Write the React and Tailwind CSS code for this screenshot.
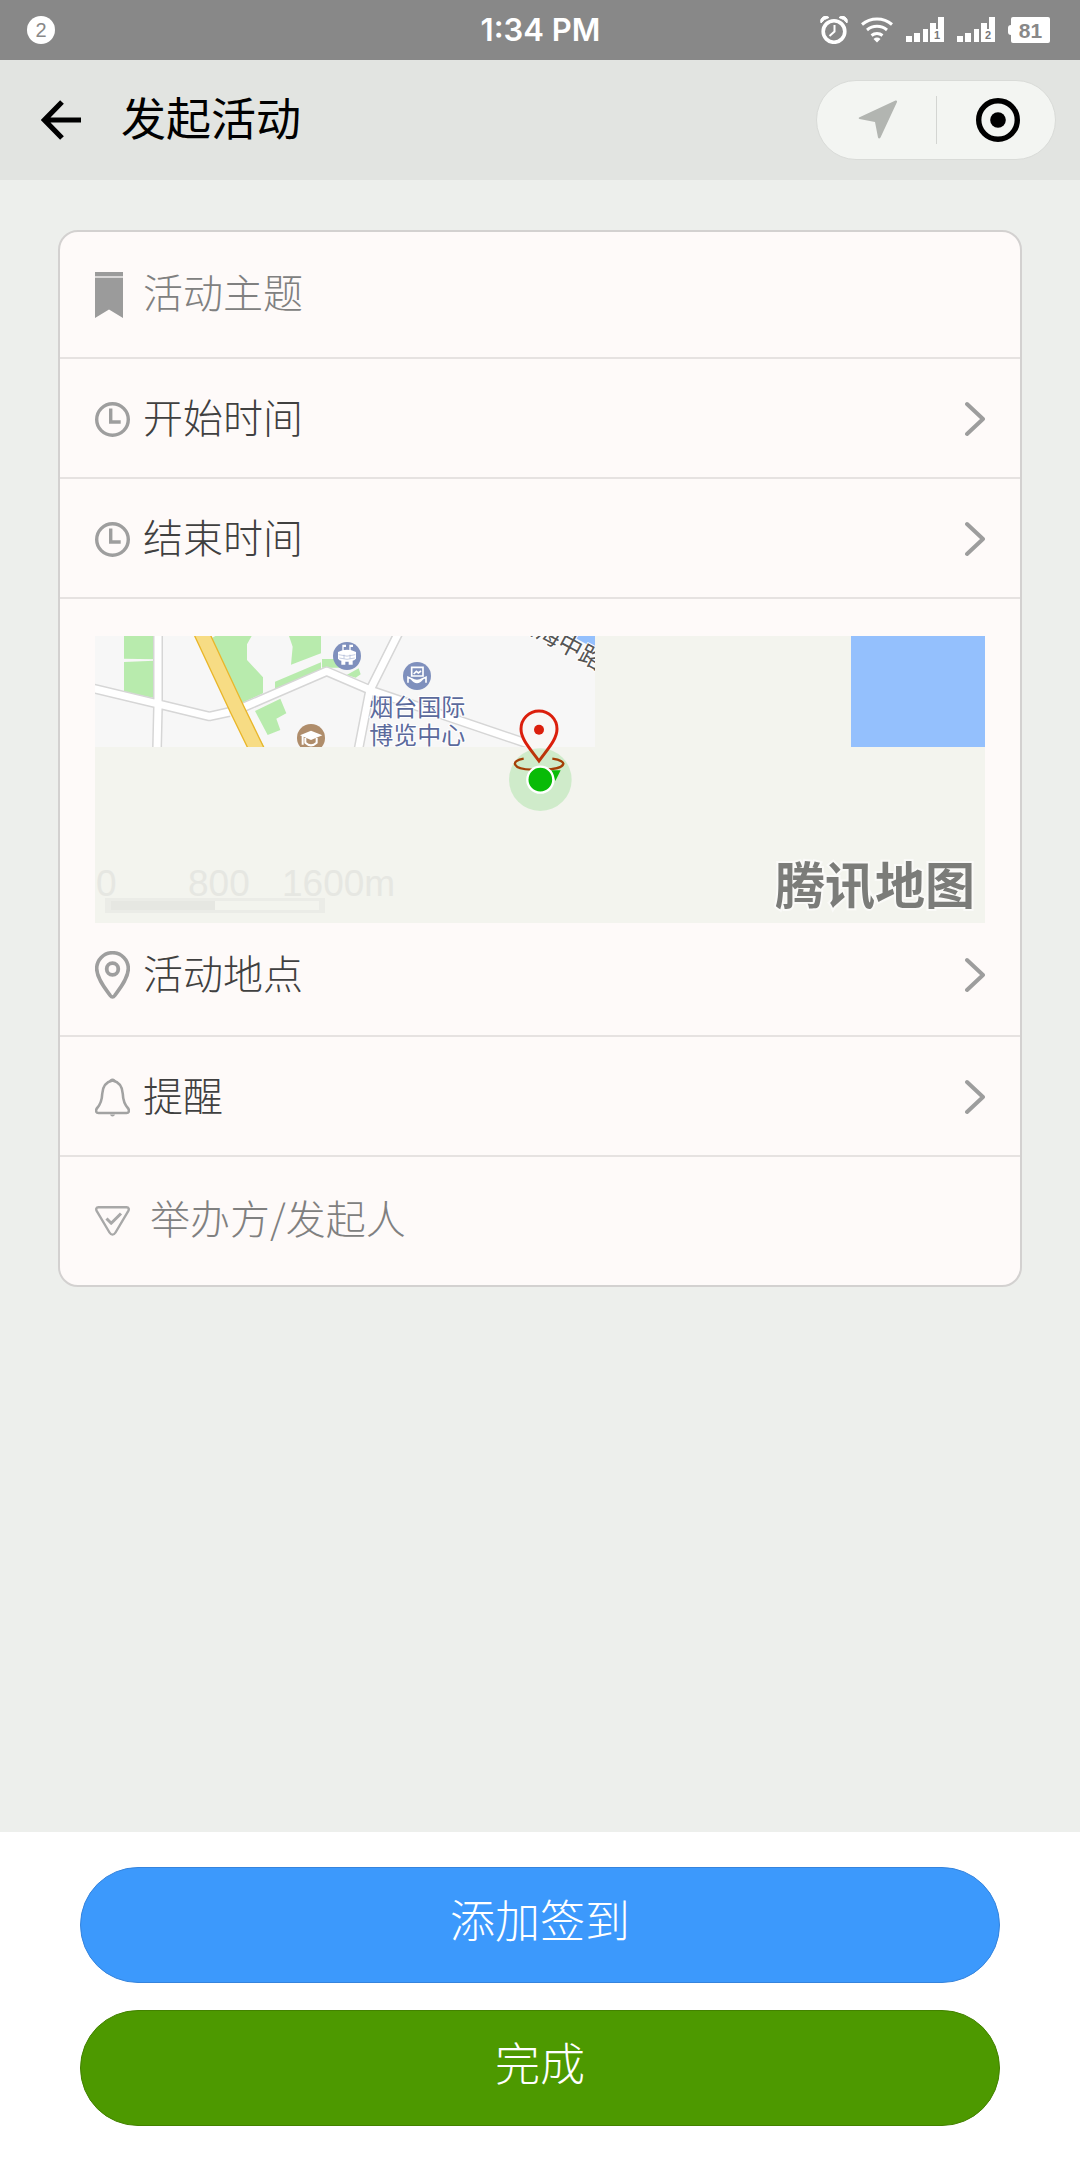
import React, { useState } from 'react';

const LINK_ROW = 'flex h-[120px] w-full items-center border-b-2 border-[#e6e2e1] px-[35px] pt-[2px] text-left';
const LABEL = 'ml-[13px] flex-1 text-[40px] leading-[56px] font-light text-[#404040]';
const FIELD = "mb-2 h-[56px] min-w-0 flex-1 bg-transparent font-['Noto_Sans_CJK_SC',sans-serif] text-[40px] leading-[56px] font-light text-[#404040] outline-none placeholder:text-[#808080]";

function SignalIcon({ sim }) {
  return (
    <svg width="38" height="26" viewBox="0 0 38 26" fill="#fff">
      <path d="M0 19h6v6H0zM8 16h6v9H8zM17 12h5v13h-5zM24 6h6v6h2V0h6v25H24z" />
      <text x="31" y="22" textAnchor="middle" fontSize="11" fontWeight="700" fill="#777">{sim}</text>
    </svg>
  );
}

function StatusBar() {
  return (
    <div className="grid h-[60px] grid-cols-3 items-center bg-[#888888] pr-[30px] pl-[27px] text-white">
      <div>
        <span className="flex h-7 w-7 items-center justify-center rounded-full bg-white text-[20px] leading-none text-[#888888]">2</span>
      </div>
      <div className="pl-1 text-center font-['Inter',sans-serif] text-[31px] leading-[40px] font-semibold">1:34 PM</div>
      <div className="flex items-center justify-end gap-[13px]">
        {/* alarm */}
        <svg width="28" height="28" viewBox="0 0 28 28" fill="none" stroke="#fff">
          <circle cx="14" cy="15.500" r="10.800" strokeWidth="3.600" />
          <path d="M14.500 9v6.500L9.500 20" strokeWidth="2" />
          <path d="M1 7a5 5 0 0 1 8-5.500A15 15 0 0 0 1 7zM27 7a5 5 0 0 0-8-5.500A15 15 0 0 1 27 7z" fill="#fff" strokeWidth="1" />
        </svg>
        {/* wifi */}
        <svg width="32" height="26" viewBox="0 0 32 26" fill="none" stroke="#fff" strokeWidth="3">
          <path d="M1 7.500a23 23 0 0 1 30 0M6 13a15.500 15.500 0 0 1 20 0M10.500 18.500a9 9 0 0 1 11 0" />
          <path d="M12.500 22a5.500 5.500 0 0 1 7 0L16 25.500z" fill="#fff" stroke="none" />
        </svg>
        <SignalIcon sim="1" />
        <SignalIcon sim="2" />
        <span className="flex items-center">
          <span className="h-[10px] w-[3px] rounded-l-sm bg-white" />
          <span className="flex h-[26px] w-[39px] items-center justify-center rounded-[2px] bg-white text-[21px] leading-none font-bold text-[#888888]">81</span>
        </span>
      </div>
    </div>
  );
}

function NavBar() {
  return (
    <header className="flex h-[120px] items-center bg-[#e2e4e1] pr-6 pl-[41px]">
      <button aria-label="返回">
        <svg width="40" height="40" viewBox="0 0 40 40" fill="none" stroke="#000" strokeWidth="5.200">
          <path d="M21 2 3.500 20 21 38M3 20h37" />
        </svg>
      </button>
      <h1 className="ml-10 flex-1 pt-[2px] text-[45px] leading-[60px] font-normal text-black">发起活动</h1>
      <div className="flex h-20 w-60 items-center rounded-full border border-[#d9dbd8] bg-[#f3f5f2]">
        <button aria-label="位置" className="flex flex-1 justify-center pl-1">
          <svg width="40" height="40" viewBox="0 0 40 40" fill="#b2b5b1">
            <path d="M1 17.500 37.500.500q2-.500 1.500 1.500L22.500 37.500q-1.500 2-2.500 0L17 22 1.500 19q-1.500-.800-.500-1.500z" />
          </svg>
        </button>
        <span className="h-12 w-px bg-[#d3d5d2]" />
        <button aria-label="关闭" className="flex flex-1 justify-center pl-1">
          <svg width="44" height="44" viewBox="0 0 44 44">
            <circle cx="22" cy="22" r="19.300" fill="none" stroke="#000" strokeWidth="5.400" />
            <circle cx="22" cy="22" r="7.800" />
          </svg>
        </button>
      </div>
    </header>
  );
}

function Chevron() {
  return (
    <svg width="20" height="36" viewBox="0 0 20 36" fill="none" stroke="#9d9d9d" strokeWidth="4" strokeLinecap="round" strokeLinejoin="round">
      <path d="m2 3 16 15L2 33" />
    </svg>
  );
}

function ClockIcon() {
  return (
    <svg width="35" height="36" viewBox="0 0 35 36" fill="none" stroke="#9e9e9e" strokeWidth="3.400">
      <circle cx="17.500" cy="18.500" r="15.800" />
      <path d="M15.700 7.500V21h10" />
    </svg>
  );
}

function BookmarkIcon() {
  return (
    <svg width="35" height="46" viewBox="0 0 35 46" fill="#9b9b9b">
      <path d="M0 0h28v4H0zM0 6h28v40l-14-8.500L0 46z" />
      <path d="M0 4h28v2H0z" fill="#d9d7d7" />
    </svg>
  );
}

function PinIcon() {
  return (
    <svg width="35" height="48" viewBox="0 0 35 48" fill="none" stroke="#9e9e9e" strokeWidth="3.600">
      <path d="M17.500 1.700C8.500 1.700 1.700 9 1.700 17.500c0 9.500 8 19.500 13.500 27q2.300 3 4.600 0c5.500-7.500 13.500-17.500 13.500-27 0-8.500-6.800-15.800-15.800-15.800z" />
      <circle cx="17.500" cy="18" r="5.800" strokeWidth="3.800" />
    </svg>
  );
}

function BellIcon() {
  return (
    <svg width="35" height="39" viewBox="0 0 35 39" fill="none" stroke="#a2a2a2" strokeWidth="2.600" strokeLinejoin="round">
      <path d="M17.500 2.500C10.500 4 7.500 9 7.200 16 7 23 5 27 1.800 30.500c-1.500 2.500-.500 4.500 1.700 4.500h28c2.200 0 3.200-2 1.700-4.500C30 27 28 23 27.800 16c-.300-7-3.300-12-10.300-13.500z" />
      <path d="M13.500 4q1-3.500 4-3.500t4 3.500zM15 36.500h5q-.500 2-2.500 2t-2.500-2z" fill="#a2a2a2" stroke="none" />
    </svg>
  );
}

function HostIcon() {
  return (
    <svg width="35" height="30" viewBox="0 0 35 30" fill="none" stroke="#a8a8a8" strokeWidth="2.400" strokeLinejoin="round">
      <path d="M3.500 1.200h28c2.300 0 2.800 2 1.700 4L20.500 26.500c-1.700 2.800-4.300 2.800-6 0L1.800 5.200c-1.100-2-.600-4 1.700-4z" />
      <path d="m11.500 12.500 4.700 4.800L26 7.500" strokeWidth="3" />
    </svg>
  );
}

// loaded map tile, three units per pixel
function MapTile() {
  return (
    <svg className="absolute top-0 left-0" width="500" height="111" viewBox="15 18 1500 333">
      <path d="M15 18h1500v333H15z" fill="#f7f7f7" />
      <g fill="#b8ebad">
        <path d="M102 18h90v70l-90-2zM102 96l90-4v112l-90-18z" />
        <path d="M366 24l10-6h109l-14 25v47l48 52v48l-62 28z" />
        <path d="M597 18h96v52l-90 34 5-54zM555 155l138-58v22L555 184zM696 87h84v26h-84z" />
        <path d="M495 243l76-37 18 44-30 16 12 34-38 15zM465 245l58 106h-12zM770 135l36-20 6 18-15 10z" />
      </g>
      {/* roads */}
      <path d="M204 0v230l-3 130M0 173l200 48 158 38 60-13M460 232l250-108 140 60 560 190M930 0l-90 180-35 180" fill="none" stroke="#d6d6d6" strokeWidth="30" strokeLinejoin="round" />
      <path d="M204 0v230l-3 130M0 173l200 48 158 38 60-13M460 232l250-108 140 60 560 190M930 0l-90 180-35 180" fill="none" stroke="#fff" strokeWidth="21" strokeLinejoin="round" />
      <path d="M330 0l110 235 68 140" fill="none" stroke="#e9b62a" strokeWidth="48" />
      <path d="M330 0l110 235 68 140" fill="none" stroke="#f7dc84" strokeWidth="40" />
      {/* places */}
      <g>
        <circle cx="771" cy="78" r="42" fill="#7f90bd" />
        <path d="M744 66q27-14 54 0v20q-6 6-10 6v12h-12v-9h-10v9h-12V92q-6 0-10-6zM757 44h11v7h-7v12h-4zM778 44h11v7h-7v12h-4z" fill="#fff" />
        <path d="M746 74q25 9 50 0M748 84q23 8 46 0M762 74v12M780 74v12" fill="none" stroke="#a9b5d3" strokeWidth="2" />
      </g>
      <g fill="none" stroke="#fff" strokeWidth="5">
        <circle cx="981" cy="138" r="42" fill="#7f90bd" stroke="none" />
        <path d="M965 112h34v26h-34zM971 132l8-8 6 5 8-6M954 158v-16l10 4q17 12 34 0l10-4v16M964 146q17 22 34 0" />
      </g>
      <g>
        <circle cx="663" cy="324" r="42" fill="#af8d6b" />
        <path d="M630 316l33-14 34 14-34 14z" fill="#fff" />
        <path d="M646 324v14q17 16 34 0v-14M638 318v26" fill="none" stroke="#fff" strokeWidth="6" />
      </g>
      <path d="M1445 18h70v34l-30-12z" fill="#94c0fd" />
      <g fontSize="72" fill="#5b6a9c" stroke="#fff" strokeWidth="6" paintOrder="stroke">
        <text x="838" y="258">烟台国际</text>
        <text x="838" y="342">博览中心</text>
      </g>
      <text x="1270" y="-14" transform="rotate(28 1270 -14)" fontSize="72" fill="#555" stroke="#fff" strokeWidth="6" paintOrder="stroke">黄海中路</text>
    </svg>
  );
}

function LocationMarker() {
  return (
    <svg className="absolute top-[71px] left-1/2 -translate-x-1/2" width="64" height="106" viewBox="0 0 192 318">
      <path d="M93 12c-30 0-54 24-54 54 0 32 30 62 54 96 24-34 54-64 54-96 0-30-24-54-54-54z" fill="#f9f7f5" stroke="#db1f0c" strokeWidth="9" />
      <circle cx="93" cy="68" r="15" fill="#db1f0c" />
      <path d="M47 155c-40 6-36 31 25 33M133 155c50 6 44 31-25 33" fill="none" stroke="#c02a08" strokeWidth="7" />
      <circle cx="97" cy="218" r="94" fill="#04be02" fillOpacity=".15" />
      <path d="M130 190h28l-16 32z" fill="#09bb07" />
      <circle cx="97" cy="218" r="39" fill="#09bb07" stroke="#fff" strokeWidth="7" />
    </svg>
  );
}

function MapView() {
  return (
    <div className="relative h-[287px] overflow-hidden bg-[#f3f4ee]">
      <MapTile />
      <div className="absolute top-0 right-0 h-[111px] w-[134px] bg-[#94c0fd]" />
      <LocationMarker />
      <div className="absolute bottom-[10px] left-px text-[37px] leading-[28px] text-[#e6e7e2]">
        <div className="flex">
          <span className="w-[92px]">0</span>
          <span className="w-[94px]">800</span>
          <span>1600m</span>
        </div>
        <div className="ml-[9px] h-[15px] w-[220px] border-x-[6px] border-y-[3px] border-[#ebece7]">
          <div className="h-full w-1/2 bg-[#e6e7e2]" />
        </div>
      </div>
      <div className="absolute right-[10px] bottom-2 text-[50px] leading-[56px] font-bold text-[#7b7c79] [paint-order:stroke] [-webkit-text-stroke:4px_#fafaf8]">腾讯地图</div>
    </div>
  );
}

export default function App() {
  const [theme, setTheme] = useState('');
  const [host, setHost] = useState('');

  return (
    <div className="flex min-h-screen flex-col bg-[#edefec] font-['Liberation_Sans','Noto_Sans_CJK_SC',sans-serif]">
      <StatusBar />
      <NavBar />

      <main className="flex-1 px-[58px] pt-[50px]">
        <form className="overflow-hidden rounded-[20px] border-2 border-[#d3d1d0] bg-[#fefaf9]">
          <div className="flex h-[127px] items-center border-b-2 border-[#e6e2e1] px-[35px]">
            <label htmlFor="theme" aria-label="活动主题"><BookmarkIcon /></label>
            <input id="theme" value={theme} onChange={(e) => setTheme(e.target.value)} placeholder="活动主题" className={`${FIELD} ml-[13px]`} />
          </div>
          <button type="button" className={LINK_ROW}>
            <ClockIcon />
            <span className={LABEL}>开始时间</span>
            <Chevron />
          </button>
          <button type="button" className={LINK_ROW}>
            <ClockIcon />
            <span className={LABEL}>结束时间</span>
            <Chevron />
          </button>
          <div className="px-[35px] pt-[37px]">
            <MapView />
          </div>
          <button type="button" className="flex h-[114px] w-full items-center border-b-2 border-[#e6e2e1] px-[35px] pb-2 text-left">
            <PinIcon />
            <span className={LABEL}>活动地点</span>
            <Chevron />
          </button>
          <button type="button" className={LINK_ROW}>
            <BellIcon />
            <span className={LABEL}>提醒</span>
            <Chevron />
          </button>
          <div className="flex h-[128px] items-center px-[35px]">
            <label htmlFor="host" aria-label="举办方/发起人"><HostIcon /></label>
            <input id="host" value={host} onChange={(e) => setHost(e.target.value)} placeholder="举办方/发起人" className={`${FIELD} ml-5`} />
          </div>
        </form>
      </main>

      <footer className="flex flex-col gap-[27px] bg-white px-20 pt-[35px] pb-[34px] text-[45px] font-light text-white">
        <button className="h-[116px] rounded-full border border-[#3584dd] bg-[#3c99fc] pb-1">添加签到</button>
        <button className="h-[116px] rounded-full border border-[#438200] bg-[#4d9900] pb-1">完成</button>
      </footer>
    </div>
  );
}
